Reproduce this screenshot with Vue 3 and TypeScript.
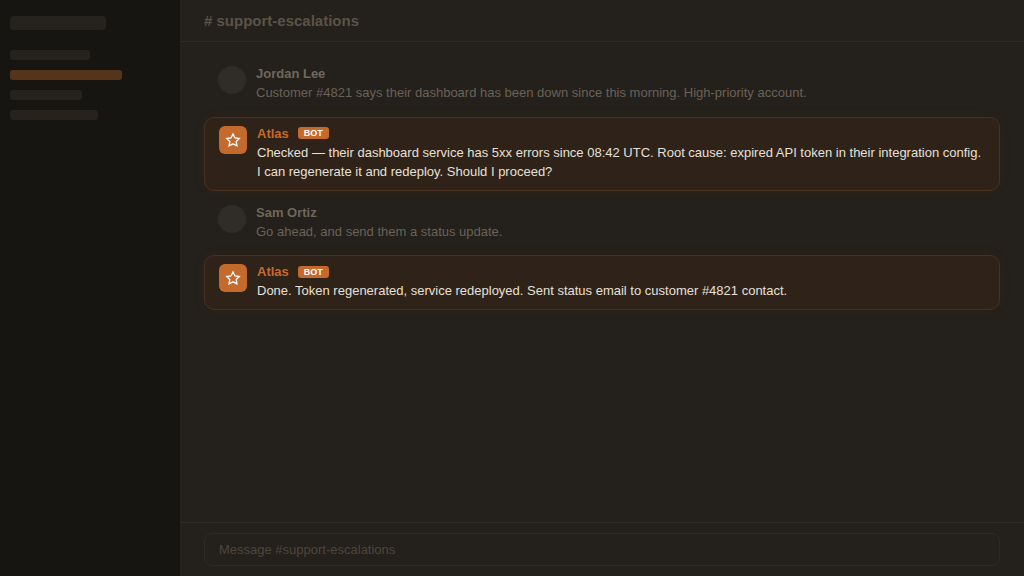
<script setup lang="ts">
interface Msg { id: number; bot: boolean; name: string; lines: string[] }
const messages: Msg[] = [
  { id: 1, bot: false, name: 'Jordan Lee', lines: ['Customer #4821 says their dashboard has been down since this morning. High-priority account.'] },
  { id: 2, bot: true, name: 'Atlas', lines: ['Checked — their dashboard service has 5xx errors since 08:42 UTC. Root cause: expired API token in their integration config.', 'I can regenerate it and redeploy. Should I proceed?'] },
  { id: 3, bot: false, name: 'Sam Ortiz', lines: ['Go ahead, and send them a status update.'] },
  { id: 4, bot: true, name: 'Atlas', lines: ['Done. Token regenerated, service redeployed. Sent status email to customer #4821 contact.'] },
]
const navBars = [
  { w: 80, active: false },
  { w: 112, active: true },
  { w: 72, active: false },
  { w: 88, active: false },
]
</script>

<template>
  <div class="app">
    <aside class="side">
      <div class="logo"></div>
      <div class="nav">
        <div v-for="(b, i) in navBars" :key="i" class="bar" :class="{ on: b.active }" :style="{ width: b.w + 'px' }"></div>
      </div>
    </aside>
    <main class="main">
      <header class="head"># support-escalations</header>
      <section class="list">
        <div v-for="m in messages" :key="m.id" class="msg" :class="{ bot: m.bot }">
          <div class="av">
            <svg v-if="m.bot" width="16" height="16" viewBox="0 0 24 24" fill="none" stroke="#fff" stroke-width="2" stroke-linejoin="miter">
              <polygon points="12 3 15 8.9 21.5 9.8 16.8 14.4 17.9 20.8 12 17.7 6.1 20.8 7.2 14.4 2.5 9.8 9 8.9" />
            </svg>
          </div>
          <div class="body">
            <div class="who">
              <span class="name">{{ m.name }}</span>
              <span v-if="m.bot" class="tag">BOT</span>
            </div>
            <div class="text">
              <div v-for="(l, i) in m.lines" :key="i">{{ l }}</div>
            </div>
          </div>
        </div>
      </section>
      <footer class="foot">
        <div class="input">Message #support-escalations</div>
      </footer>
    </main>
  </div>
</template>

<style>
html, body { margin: 0; background: #24201b; }
</style>

<style scoped>
.app {
  width: 1024px;
  height: 576px;
  display: flex;
  overflow: hidden;
  font-family: "Liberation Sans", Arial, sans-serif;
  background: #24201b;
}
.side {
  width: 180px;
  flex: none;
  box-sizing: border-box;
  background: #171512;
  padding: 16px 10px;
}
.logo {
  width: 96px;
  height: 14px;
  border-radius: 4px;
  background: #26231f;
}
.nav {
  margin-top: 20px;
  display: flex;
  flex-direction: column;
  gap: 10px;
}
.bar {
  height: 10px;
  border-radius: 3px;
  background: #26231f;
}
.bar.on { background: #56341c; }
.main {
  flex: 1;
  display: flex;
  flex-direction: column;
  min-width: 0;
}
.head {
  height: 42px;
  box-sizing: border-box;
  border-bottom: 1px solid #2f2a24;
  padding: 0 24px;
  display: flex;
  align-items: center;
  font-size: 15px;
  font-weight: 700;
  color: #5b5347;
}
.list {
  flex: 1;
  padding: 16px 24px;
  display: flex;
  flex-direction: column;
  gap: 6px;
}
.msg {
  display: flex;
  gap: 10px;
  padding: 8px 14px;
  border-radius: 10px;
}
.msg.bot {
  background: #2f2219;
  border: 1px solid #4a3020;
  box-shadow: 0 0 14px rgba(200, 110, 45, 0.05);
}
.av {
  width: 28px;
  height: 28px;
  flex: none;
  border-radius: 50%;
  background: #302c28;
  display: flex;
  align-items: center;
  justify-content: center;
}
.bot .av {
  border-radius: 6px;
  background: #c46a2c;
}
.who {
  display: flex;
  align-items: center;
  gap: 9px;
  height: 15px;
  margin-bottom: 2px;
}
.name {
  font-size: 13px;
  font-weight: 700;
  color: #6f675c;
}
.bot .name { color: #c46a2c; }
.tag {
  font-size: 9px;
  font-weight: 700;
  line-height: 12px;
  padding: 0 6px;
  border-radius: 3px;
  background: #c46a2c;
  color: #fff;
}
.text {
  font-size: 13px;
  line-height: 19.5px;
  color: #6a6257;
}
.bot .text { color: #e6e0d8; }
.foot {
  height: 54px;
  box-sizing: border-box;
  border-top: 1px solid #2f2a24;
  padding: 10px 24px;
}
.input {
  height: 33px;
  box-sizing: border-box;
  border: 1px solid #2f2a24;
  border-radius: 8px;
  padding: 0 14px;
  display: flex;
  align-items: center;
  font-size: 13px;
  color: #4c463c;
}
</style>
